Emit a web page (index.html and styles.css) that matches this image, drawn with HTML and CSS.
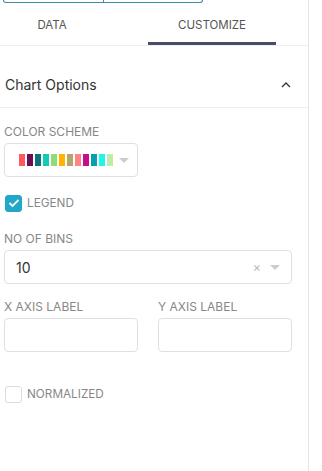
FILE: index.html
```html
<!DOCTYPE html>
<html lang="en">
<head>
    <meta charset="UTF-8">
    <title>Chart Options</title>
    <link rel="stylesheet" href="styles.css">
</head>
<body>

<div class="panel">
    <div class="top-group">
        <div class="top-btn"></div>
        <div class="top-btn"></div>
    </div>

    <div class="tabs">
        <div class="tab tab-data">DATA</div>
        <div class="tab tab-custom active">CUSTOMIZE</div>
    </div>

    <div class="section-head">
        <span>Chart Options</span>
        <svg width="12" height="8" viewBox="0 0 12 8" class="chevron">
            <path d="M2 6 L6 2 L10 6" fill="none" stroke="#333" stroke-width="1.3"/>
        </svg>
    </div>

    <div class="section-body">
        <div class="field">
            <label class="ctrl-label">COLOR SCHEME</label>
            <div class="select select-half">
                <div class="swatches">
                    <span style="background:#ff5a5f"></span>
                    <span style="background:#6b0f4f"></span>
                    <span style="background:#0c737e"></span>
                    <span style="background:#16c9b5"></span>
                    <span style="background:#8fdc73"></span>
                    <span style="background:#ffb400"></span>
                    <span style="background:#b3a56f"></span>
                    <span style="background:#ff8383"></span>
                    <span style="background:#c50f8a"></span>
                    <span style="background:#069fac"></span>
                    <span style="background:#1ff8e8"></span>
                    <span style="background:#bfeaa9"></span>
                </div>
                <span class="caret"></span>
            </div>
        </div>

        <div class="check-row">
            <span class="checkbox checked">
                <svg width="12" height="10" viewBox="0 0 12 10">
                    <path d="M1.5 5 L4.5 8 L10.5 2" fill="none" stroke="#fff" stroke-width="1.8"/>
                </svg>
            </span>
            <span class="check-label">LEGEND</span>
        </div>

        <div class="field">
            <label class="ctrl-label">NO OF BINS</label>
            <div class="select select-full">
                <span class="value">10</span>
                <span class="clear">×</span>
                <span class="caret"></span>
            </div>
        </div>

        <div class="field-row">
            <div class="field">
                <label class="ctrl-label">X AXIS LABEL</label>
                <input type="text" class="text-input">
            </div>
            <div class="field">
                <label class="ctrl-label">Y AXIS LABEL</label>
                <input type="text" class="text-input">
            </div>
        </div>

        <div class="check-row check-normalized">
            <span class="checkbox"></span>
            <span class="check-label">NORMALIZED</span>
        </div>
    </div>
</div>

</body>
</html>
```

FILE: styles.css
```css
body {
    margin: 0;
    padding: 0;
    background: #fff;
    font-family: Inter, "Noto Sans", sans-serif;
    color: #333;
}
.panel {
    width: 309px;
    height: 471px;
    border-right: 1px solid #e3e3e3;
    box-sizing: border-box;
}
.top-group {
    display: flex;
    width: 200px;
    height: 3px;
    margin-left: 3px;
    border: 1px solid #3f8aa0;
    border-top: none;
    border-radius: 0 0 5px 5px;
    box-sizing: border-box;
}
.top-btn {
    flex: 1;
}
.top-btn + .top-btn {
    border-left: 1px solid #3f8aa0;
}
.tabs {
    display: flex;
    height: 42px;
    border-bottom: 1px solid #efefef;
}
.tab {
    font-size: 11.5px;
    color: #555;
    display: flex;
    align-items: center;
    justify-content: center;
    box-sizing: border-box;
    padding-top: 2px;
}
.tab-data {
    width: 104px;
}
.tab-custom {
    width: 128px;
    margin-left: 44px;
}
.tab.active {
    border-bottom: 3px solid #484c69;
    padding-top: 5px;
}
.section-head {
    display: flex;
    align-items: center;
    justify-content: space-between;
    height: 62px;
    box-sizing: border-box;
    padding: 16px 16px 0 5px;
    border-bottom: 1px solid #efefef;
    font-size: 14px;
    color: #333;
}
.chevron {
    display: block;
}
.section-body {
    padding: 17px 17px 0 4px;
}
.ctrl-label {
    display: block;
    font-size: 12px;
    color: #878787;
    margin-bottom: 4px;
    line-height: 14px;
}
.select {
    display: flex;
    align-items: center;
    height: 34px;
    border: 1px solid #e0e0e0;
    border-radius: 4px;
    box-sizing: border-box;
    padding: 0 11px 0 11px;
}
.select-half {
    width: 134px;
}
.select-full {
    width: 288px;
}
.swatches {
    display: flex;
    gap: 2px;
    margin-left: 3px;
}
.swatches span {
    width: 6px;
    height: 12px;
}
.caret {
    width: 0;
    height: 0;
    border-left: 5px solid transparent;
    border-right: 5px solid transparent;
    border-top: 5px solid #ccc;
    margin-left: auto;
}
.select-half .caret {
    margin-left: 6px;
}
.value {
    font-size: 14px;
    color: #333;
}
.clear {
    margin-left: auto;
    color: #bbb;
    font-size: 13px;
    margin-right: 9px;
}
.select-full .caret {
    margin-left: 0;
}
.check-row {
    display: flex;
    align-items: center;
    gap: 5px;
    margin: 17px 0 0 1px;
    height: 18px;
}
.checkbox {
    width: 17px;
    height: 17px;
    border: 1px solid #ddd;
    border-radius: 3px;
    box-sizing: border-box;
    display: flex;
    align-items: center;
    justify-content: center;
}
.checkbox.checked {
    background: #20a7c9;
    border-color: #20a7c9;
}
.check-label {
    font-size: 11.75px;
    color: #878787;
}
.check-row + .field {
    margin-top: 20px;
}
.field-row {
    display: flex;
    gap: 20px;
    margin-top: 16px;
}
.text-input {
    display: block;
    width: 134px;
    height: 34px;
    border: 1px solid #e0e0e0;
    border-radius: 4px;
    box-sizing: border-box;
    margin: 0;
}
.check-normalized {
    margin-top: 33px;
}
```
